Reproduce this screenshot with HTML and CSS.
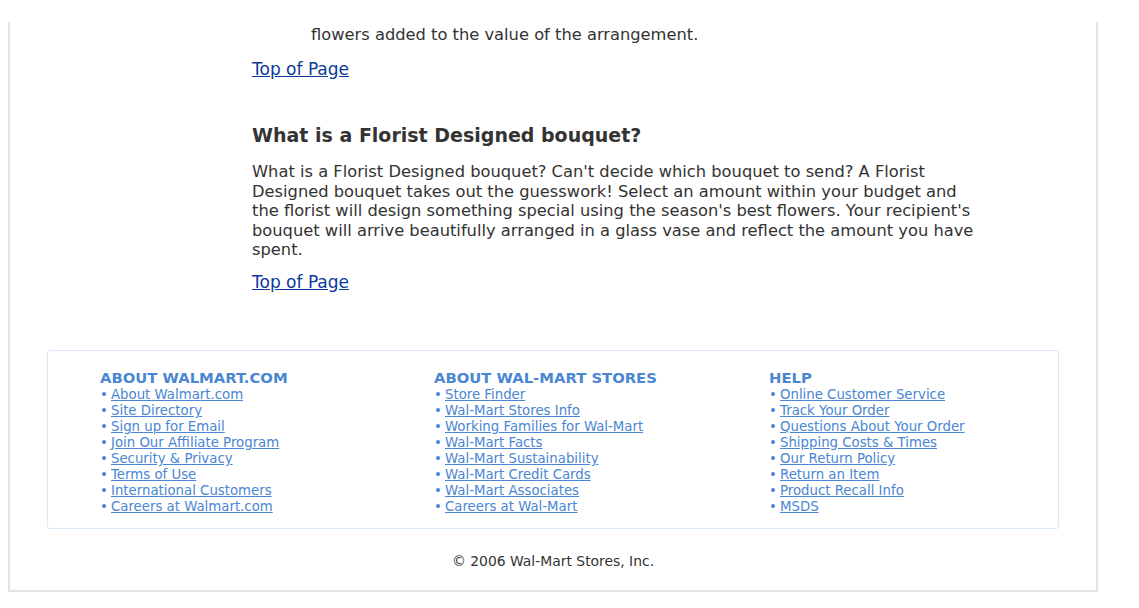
FILE: index.html
```html
<!DOCTYPE html>
<html>
<head>
<meta charset="utf-8">
<link rel="stylesheet" href="styles.css">
</head>
<body>
<div class="page">
  <div class="content">
    <p class="indent">flowers added to the value of the arrangement.</p>
    <p class="top"><a href="#">Top of Page</a></p>
    <h2 class="q">What is a Florist Designed bouquet?</h2>
    <p class="answer">What is a Florist Designed bouquet? Can't decide which bouquet to send? A Florist Designed bouquet takes out the guesswork! Select an amount within your budget and the florist will design something special using the season's best flowers. Your recipient's bouquet will arrive beautifully arranged in a glass vase and reflect the amount you have spent.</p>
    <p class="top top-last"><a href="#">Top of Page</a></p>
  </div>
  <div class="footer">
    <div class="col">
      <h3>ABOUT WALMART.COM</h3>
      <ul>
        <li><a href="#">About Walmart.com</a></li>
        <li><a href="#">Site Directory</a></li>
        <li><a href="#">Sign up for Email</a></li>
        <li><a href="#">Join Our Affiliate Program</a></li>
        <li><a href="#">Security &amp; Privacy</a></li>
        <li><a href="#">Terms of Use</a></li>
        <li><a href="#">International Customers</a></li>
        <li><a href="#">Careers at Walmart.com</a></li>
      </ul>
    </div>
    <div class="col">
      <h3>ABOUT WAL-MART STORES</h3>
      <ul>
        <li><a href="#">Store Finder</a></li>
        <li><a href="#">Wal-Mart Stores Info</a></li>
        <li><a href="#">Working Families for Wal-Mart</a></li>
        <li><a href="#">Wal-Mart Facts</a></li>
        <li><a href="#">Wal-Mart Sustainability</a></li>
        <li><a href="#">Wal-Mart Credit Cards</a></li>
        <li><a href="#">Wal-Mart Associates</a></li>
        <li><a href="#">Careers at Wal-Mart</a></li>
      </ul>
    </div>
    <div class="col">
      <h3>HELP</h3>
      <ul>
        <li><a href="#">Online Customer Service</a></li>
        <li><a href="#">Track Your Order</a></li>
        <li><a href="#">Questions About Your Order</a></li>
        <li><a href="#">Shipping Costs &amp; Times</a></li>
        <li><a href="#">Our Return Policy</a></li>
        <li><a href="#">Return an Item</a></li>
        <li><a href="#">Product Recall Info</a></li>
        <li><a href="#">MSDS</a></li>
      </ul>
    </div>
  </div>
  <p class="copy">© 2006 Wal-Mart Stores, Inc.</p>
</div>
</body>
</html>
```

FILE: styles.css
```css
html, body {
  margin: 0;
  padding: 0;
  background: #fff;
}
body {
  font-family: "DejaVu Sans", Verdana, sans-serif;
  color: #333;
  padding: 22px 0 0 8px;
}
.page {
  width: 1086px;
  border-left: 2px solid #e3e3e3;
  border-right: 2px solid #e3e3e3;
  border-bottom: 2px solid #e3e3e3;
  padding-bottom: 20px;
}
.content {
  padding-left: 242px;
  padding-right: 110px;
  padding-bottom: 58px;
}
.content p {
  margin: 0;
  font-size: 16.3px;
  line-height: 19.5px;
}
.content .indent {
  padding-left: 59px;
  padding-top: 3px;
}
.content .top {
  font-size: 17px;
  margin-top: 15px;
}
.content .top-last {
  margin-top: 13px;
}
.top a {
  color: #0a3a9c;
}
.q {
  font-size: 19px;
  font-weight: bold;
  margin: 45px 0 16px;
  line-height: 22px;
}
.footer {
  margin: 0 37px 0 37px;
  border: 1px solid #dbe8f8;
  border-radius: 3px;
  display: grid;
  grid-template-columns: 334px 335px 1fr;
  padding: 17px 0 13px 52px;
}
.col h3 {
  margin: 0;
  font-size: 14.8px;
  line-height: 19px;
  color: #4a86d2;
  font-weight: bold;
}
.col ul {
  list-style: none;
  margin: 0;
  padding: 0;
}
.col li {
  font-size: 13.3px;
  line-height: 16px;
  color: #4a86d2;
}
.col li::before {
  content: "•";
  display: inline-block;
  width: 11px;
}
.col a {
  color: #4a86d2;
}
.copy {
  text-align: center;
  font-size: 13.9px;
  margin: 23px 0 0;
  line-height: 18px;
}
```
